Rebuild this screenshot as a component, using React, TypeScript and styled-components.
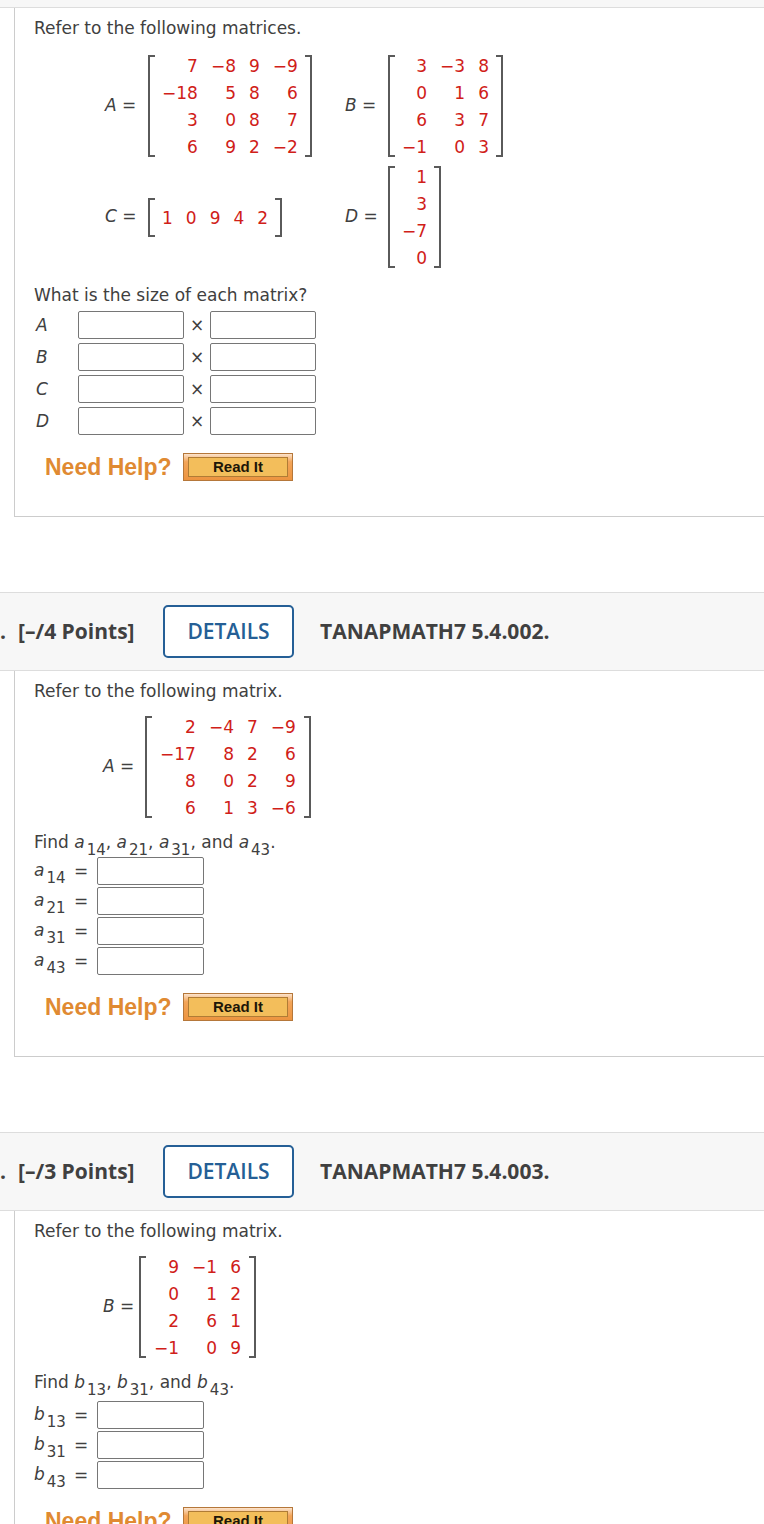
import React, { Fragment } from "react";
import styled, { createGlobalStyle } from "styled-components";

const GlobalStyle = createGlobalStyle`
  *, *::before, *::after { box-sizing: border-box; }
  html, body { margin: 0; background: #fff; }
`;

const Page = styled.main`
  height: 100vh;
  overflow-x: hidden;
  overflow-y: auto;
  scrollbar-width: none;
  background: #fff;
  color: #404040;
  font: 17px/24px Verdana, "DejaVu Sans", sans-serif;
`;

const HeaderEnd = styled.div`
  height: 8px;
  background: #f7f7f7;
  border-bottom: 1px solid #ddd;
`;

const Header = styled.header`
  display: flex;
  align-items: center;
  padding: 12px 0;
  background: #f7f7f7;
  border: solid #ddd;
  border-width: 1px 0;
  font: 700 21px/28px "Open Sans", sans-serif;
  white-space: nowrap;
`;

const Dot = styled.span`
  width: 18px;
  padding-bottom: 2px;
`;

const Points = styled.span`
  width: 145px;
  padding-bottom: 2px;
`;

const DetailsButton = styled.button`
  width: 131px;
  height: 53px;
  margin-right: 26px;
  padding: 0 0 2px;
  background: #fff;
  border: 2px solid #255f96;
  border-radius: 5px;
  color: #255f96;
  font: 600 21px/28px "Open Sans", sans-serif;
`;

const Title = styled.h2`
  margin: 0;
  padding-bottom: 2px;
  font: inherit;
`;

const Body = styled.section`
  margin: 0 0 75px 14px;
  padding: 8px 0 35px 19px;
  border: solid #ccc;
  border-width: 0 0 1px 1px;
`;

const Prompt = styled.p`
  margin: 0;
`;

const MatrixGrid = styled.div`
  display: grid;
  grid-template-columns: 240px 1fr;
  row-gap: 9px;
  padding: 15px 0 15px 71px;
`;

const SingleMatrix = styled.div`
  padding: 13px 0 12px 69px;
`;

const Equation = styled.div<{ $gap: number }>`
  display: flex;
  align-items: center;
  gap: ${(p) => p.$gap}px;
`;

const EquationLabel = styled.span`
  width: 32px;
  padding-bottom: 2px;
  white-space: nowrap;
`;

const Brackets = styled.div<{ $pad: number }>`
  display: flex;
  align-items: center;
  gap: ${(p) => p.$pad}px;
  min-height: 39px;
  &::before,
  &::after {
    content: "";
    align-self: stretch;
    width: 7px;
    border: 2px solid #5a5a5a;
  }
  &::before { border-right: 0; }
  &::after { border-left: 0; }
`;

const MatrixTable = styled.table`
  border-collapse: collapse;
  color: #d02018;
  font-size: 17px;
  line-height: 20px;
  text-align: right;
  td { padding: 1px 0 0; }
  td + td { padding-left: 13px; }
  tr + tr td { padding-top: 7px; }
`;

const Sub = styled.sub`
  position: relative;
  top: 7px;
  margin-left: 2px;
  font-size: 15px;
  line-height: 0;
  vertical-align: baseline;
`;

const SizeList = styled.div`
  display: grid;
  grid-template-columns: 44px 106px 26px 106px;
  row-gap: 4px;
  align-items: center;
  padding: 4px 0 18px;
`;

const SizeLabel = styled.label`
  padding-left: 2px;
  font-style: italic;
`;

const Times = styled.span`
  text-align: center;
`;

const AnswerBox = styled.input`
  width: 100%;
  height: 28px;
  padding: 1px 4px;
  border: 1px solid #767676;
  border-radius: 2px;
  background: #fff;
  font: inherit;
`;

const EntryList = styled.div<{ $top: number }>`
  display: grid;
  grid-template-columns: 40px 23px 107px;
  row-gap: 2px;
  align-items: center;
  padding: ${(p) => p.$top}px 0 18px;
`;

const EntryLabel = styled.label`
  padding-bottom: 2px;
`;

const Help = styled.div`
  display: flex;
  align-items: center;
  padding-left: 11px;
`;

const HelpText = styled.span`
  width: 138px;
  color: #e08a32;
  font: 700 23px/28px "Liberation Sans", Arial, sans-serif;
`;

const ReadButton = styled.button`
  width: 110px;
  height: 28px;
  padding: 3px 4px;
  border: 1px solid #b5773a;
  background: linear-gradient(#fbe3cc, #f3a559 30%, #ec9440);
  color: #1c1608;
  font: 700 15px/18px "Liberation Sans", Arial, sans-serif;
`;

const ReadFace = styled.span`
  display: block;
  border: 1px solid #b07c35;
  background: #f3be5b;
`;

type Rows = string[][];

function Matrix({ name, rows, gap = 11, pad = 7 }: {
  name: string; rows: Rows; gap?: number; pad?: number;
}) {
  return (
    <Equation $gap={gap}>
      <EquationLabel><i>{name}</i> =</EquationLabel>
      <Brackets $pad={pad}>
        <MatrixTable>
          <tbody>
            {rows.map((row, r) => (
              <tr key={r}>{row.map((v, c) => <td key={c}>{v}</td>)}</tr>
            ))}
          </tbody>
        </MatrixTable>
      </Brackets>
    </Equation>
  );
}

const parse = (text: string): Rows =>
  text.split("/").map((r) => r.trim().replace(/-/g, "−").split(" "));

function NeedHelp() {
  return (
    <Help>
      <HelpText>Need Help?</HelpText>
      <ReadButton type="button"><ReadFace>Read It</ReadFace></ReadButton>
    </Help>
  );
}

function ProblemHeader({ points, title }: { points: number; title: string }) {
  return (
    <Header>
      <Dot>.</Dot>
      <Points>[–/{points} Points]</Points>
      <DetailsButton type="button">DETAILS</DetailsButton>
      <Title>{title}</Title>
    </Header>
  );
}

function Entry({ letter, index }: { letter: string; index: string }) {
  return <><i>{letter}</i><Sub>{index}</Sub></>;
}

function EntryProblem({ matrix, letter, indices, text, gap, listTop }: {
  matrix: string; letter: string; indices: string[]; text: string; gap: number; listTop: number;
}) {
  return (
    <Body>
      <Prompt>Refer to the following matrix.</Prompt>
      <SingleMatrix>
        <Matrix name={matrix} rows={parse(text)} gap={gap} pad={8} />
      </SingleMatrix>
      <Prompt>
        Find{" "}
        {indices.map((index, i) => (
          <Fragment key={index}>
            {i === indices.length - 1 && "and "}
            <Entry letter={letter} index={index} />
            {i === indices.length - 1 ? "." : ", "}
          </Fragment>
        ))}
      </Prompt>
      <EntryList $top={listTop}>
        {indices.map((index) => (
          <Fragment key={index}>
            <EntryLabel htmlFor={letter + index}><Entry letter={letter} index={index} /></EntryLabel>
            <span>=</span>
            <AnswerBox id={letter + index} type="text" />
          </Fragment>
        ))}
      </EntryList>
      <NeedHelp />
    </Body>
  );
}

export default function App() {
  return (
    <Page>
      <GlobalStyle />
      <HeaderEnd />
      <Body>
        <Prompt>Refer to the following matrices.</Prompt>
        <MatrixGrid>
          <Matrix name="A" rows={parse("7 -8 9 -9/-18 5 8 6/3 0 8 7/6 9 2 -2")} />
          <Matrix name="B" rows={parse("3 -3 8/0 1 6/6 3 7/-1 0 3")} />
          <Matrix name="C" rows={parse("1 0 9 4 2")} />
          <Matrix name="D" rows={parse("1/3/-7/0")} />
        </MatrixGrid>
        <Prompt>What is the size of each matrix?</Prompt>
        <SizeList>
          {["A", "B", "C", "D"].map((name) => (
            <Fragment key={name}>
              <SizeLabel htmlFor={`rows-${name}`}>{name}</SizeLabel>
              <AnswerBox id={`rows-${name}`} type="text" />
              <Times>×</Times>
              <AnswerBox aria-label={`${name} columns`} type="text" />
            </Fragment>
          ))}
        </SizeList>
        <NeedHelp />
      </Body>
      <ProblemHeader points={4} title="TANAPMATH7 5.4.002." />
      <EntryProblem
        matrix="A"
        letter="a"
        indices={["14", "21", "31", "43"]}
        text="2 -4 7 -9/-17 8 2 6/8 0 2 9/6 1 3 -6"
        gap={10}
        listTop={3}
      />
      <ProblemHeader points={3} title="TANAPMATH7 5.4.003." />
      <EntryProblem
        matrix="B"
        letter="b"
        indices={["13", "31", "43"]}
        text="9 -1 6/0 1 2/2 6 1/-1 0 9"
        gap={4}
        listTop={7}
      />
    </Page>
  );
}
